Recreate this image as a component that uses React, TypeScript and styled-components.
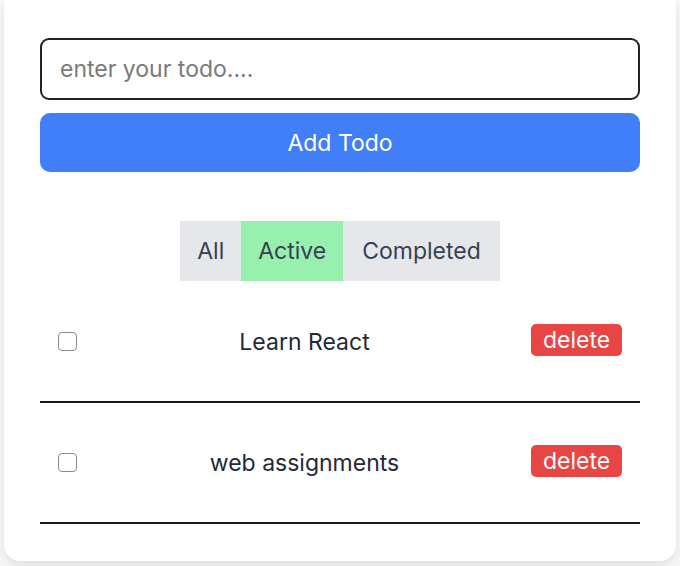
import React, { useState } from "react";
import styled, { createGlobalStyle } from "styled-components";

const GlobalStyle = createGlobalStyle`
  html, body {
    margin: 0;
    padding: 0;
    background: #f7f7f7;
    font-family: Inter, "Noto Sans", sans-serif;
  }
  * { box-sizing: border-box; }
`;

const Page = styled.div`
  width: 680px;
  height: 566px;
  padding: 0 4px;
  overflow: hidden;
`;

const Card = styled.div`
  width: 672px;
  background: #fff;
  border-radius: 0 0 16px 16px;
  box-shadow: 0 4px 10px rgba(0, 0, 0, 0.1);
  padding: 38px 36px 37px;
  display: flex;
  flex-direction: column;
`;

const Input = styled.input`
  width: 100%;
  height: 62px;
  border: 2px solid #222;
  border-radius: 9px;
  padding: 0 18px;
  font-family: inherit;
  font-size: 23px;
  color: #1f2937;
  outline: none;
  &::placeholder {
    color: #7a7a7a;
  }
`;

const AddButton = styled.button`
  margin-top: 13px;
  width: 100%;
  height: 59px;
  border: none;
  border-radius: 10px;
  background: #417ff8;
  color: #fff;
  font-family: inherit;
  font-size: 23px;
  cursor: pointer;
`;

const FilterBar = styled.div`
  margin-top: 49px;
  display: flex;
  justify-content: center;
`;

const FilterButton = styled.button<{ $active?: boolean; $pad: number }>`
  height: 60px;
  border: none;
  padding: 0 ${(p) => p.$pad}px;
  background: ${(p) => (p.$active ? "#97f0ae" : "#e5e7eb")};
  color: #374151;
  font-family: inherit;
  font-size: 23px;
  cursor: pointer;
`;

const List = styled.ul`
  list-style: none;
  margin: 1px 0 0;
  padding: 0;
`;

const Row = styled.li`
  height: 121px;
  display: grid;
  grid-template-columns: 38px 1fr 109px;
  align-items: center;
  border-bottom: 2px solid #1a1a1a;
`;

const Check = styled.input`
  appearance: none;
  margin: 0 0 0 18px;
  width: 19px;
  height: 19px;
  border: 1.5px solid #8a8a8a;
  border-radius: 4px;
  background: #fff;
  cursor: pointer;
`;

const Title = styled.span`
  text-align: center;
  font-size: 23px;
  color: #1f2937;
`;

const DeleteButton = styled.button`
  justify-self: start;
  width: 91px;
  height: 32px;
  margin-top: -3px;
  border: none;
  border-radius: 5px;
  background: #e84545;
  color: #fff;
  font-family: inherit;
  font-size: 23px;
  padding: 0;
  cursor: pointer;
`;

const filters = [
  { label: "All", pad: 17 },
  { label: "Active", pad: 17 },
  { label: "Completed", pad: 19 },
];

export default function App() {
  const [todos] = useState(["Learn React", "web assignments"]);
  return (
    <>
      <GlobalStyle />
      <Page>
        <Card>
          <Input placeholder="enter your todo...." />
          <AddButton>Add Todo</AddButton>
          <FilterBar>
            {filters.map((f) => (
              <FilterButton key={f.label} $active={f.label === "Active"} $pad={f.pad}>
                {f.label}
              </FilterButton>
            ))}
          </FilterBar>
          <List>
            {todos.map((t) => (
              <Row key={t}>
                <Check type="checkbox" />
                <Title>{t}</Title>
                <DeleteButton>delete</DeleteButton>
              </Row>
            ))}
          </List>
        </Card>
      </Page>
    </>
  );
}
